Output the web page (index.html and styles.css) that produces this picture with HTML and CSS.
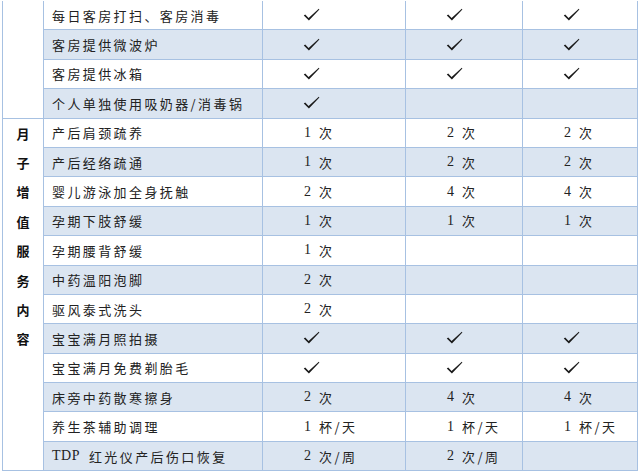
FILE: index.html
```html
<!DOCTYPE html>
<html lang="zh">
<head>
<meta charset="utf-8">
<link rel="stylesheet" href="styles.css">
</head>
<body>
<svg class="defs" width="0" height="0" aria-hidden="true">
  <defs>
    <symbol id="tick" viewBox="0 0 17 13">
      <path d="M0.8 7.4 L2.2 6.6 L5.6 10 L15.8 0.8 L16.4 1.4 L5.9 12.6 Z" fill="#1a1a1a"/>
    </symbol>
  </defs>
</svg>
<div class="table">
  <div class="side side-top"></div>
  <div class="side side-main">
    <div>月</div><div>子</div><div>增</div><div>值</div><div>服</div><div>务</div><div>内</div><div>容</div>
  </div>

  <div class="c name">每日客房打扫、客房消毒</div><div class="c v"><svg class="ck"><use href="#tick"/></svg></div><div class="c v"><svg class="ck"><use href="#tick"/></svg></div><div class="c v"><svg class="ck"><use href="#tick"/></svg></div>
  <div class="c name alt">客房提供微波炉</div><div class="c v alt"><svg class="ck"><use href="#tick"/></svg></div><div class="c v alt"><svg class="ck"><use href="#tick"/></svg></div><div class="c v alt"><svg class="ck"><use href="#tick"/></svg></div>
  <div class="c name">客房提供冰箱</div><div class="c v"><svg class="ck"><use href="#tick"/></svg></div><div class="c v"><svg class="ck"><use href="#tick"/></svg></div><div class="c v"><svg class="ck"><use href="#tick"/></svg></div>
  <div class="c name alt">个人单独使用吸奶器/消毒锅</div><div class="c v alt"><svg class="ck"><use href="#tick"/></svg></div><div class="c v alt"></div><div class="c v alt"></div>

  <div class="c name">产后肩颈疏养</div><div class="c v"><span class="n">1</span>次</div><div class="c v"><span class="n">2</span>次</div><div class="c v"><span class="n">2</span>次</div>
  <div class="c name alt">产后经络疏通</div><div class="c v alt"><span class="n">1</span>次</div><div class="c v alt"><span class="n">2</span>次</div><div class="c v alt"><span class="n">2</span>次</div>
  <div class="c name">婴儿游泳加全身抚触</div><div class="c v"><span class="n">2</span>次</div><div class="c v"><span class="n">4</span>次</div><div class="c v"><span class="n">4</span>次</div>
  <div class="c name alt">孕期下肢舒缓</div><div class="c v alt"><span class="n">1</span>次</div><div class="c v alt"><span class="n">1</span>次</div><div class="c v alt"><span class="n">1</span>次</div>
  <div class="c name">孕期腰背舒缓</div><div class="c v"><span class="n">1</span>次</div><div class="c v"></div><div class="c v"></div>
  <div class="c name alt">中药温阳泡脚</div><div class="c v alt"><span class="n">2</span>次</div><div class="c v alt"></div><div class="c v alt"></div>
  <div class="c name">驱风泰式洗头</div><div class="c v"><span class="n">2</span>次</div><div class="c v"></div><div class="c v"></div>
  <div class="c name alt">宝宝满月照拍摄</div><div class="c v alt"><svg class="ck"><use href="#tick"/></svg></div><div class="c v alt"><svg class="ck"><use href="#tick"/></svg></div><div class="c v alt"><svg class="ck"><use href="#tick"/></svg></div>
  <div class="c name">宝宝满月免费剃胎毛</div><div class="c v"><svg class="ck"><use href="#tick"/></svg></div><div class="c v"><svg class="ck"><use href="#tick"/></svg></div><div class="c v"><svg class="ck"><use href="#tick"/></svg></div>
  <div class="c name alt">床旁中药散寒擦身</div><div class="c v alt"><span class="n">2</span>次</div><div class="c v alt"><span class="n">4</span>次</div><div class="c v alt"><span class="n">4</span>次</div>
  <div class="c name">养生茶辅助调理</div><div class="c v"><span class="n">1</span>杯/天</div><div class="c v"><span class="n">1</span>杯/天</div><div class="c v"><span class="n">1</span>杯/天</div>
  <div class="c name alt"><span class="lat">TDP</span>红光仪产后伤口恢复</div><div class="c v alt"><span class="n">2</span>次/周</div><div class="c v alt"><span class="n">2</span>次/周</div><div class="c v alt"></div>
</div>
</body>
</html>
```
FILE: styles.css
```css
html, body {
  margin: 0;
  padding: 0;
  background: #ffffff;
}

.defs {
  position: absolute;
  width: 0;
  height: 0;
  overflow: hidden;
}

.table {
  display: grid;
  grid-template-columns: 40px 218px 142px 116px 114px;
  grid-auto-rows: 28.4px;
  gap: 1px;
  width: 636px;
  box-sizing: border-box;
  margin-left: 2px;
  padding: 0 1px 1px;
  border-top: 1px solid #ffffff;
  background: #a7c1e2;
  font-family: "Noto Sans CJK SC", "Liberation Serif", sans-serif;
  font-size: 13px;
  color: #222222;
  letter-spacing: 2.4px;
}

.side {
  background: #ffffff;
  grid-column: 1;
}

.side-top {
  grid-row: 1 / span 4;
}

.side-main {
  grid-row: 5 / span 12;
  display: flex;
  flex-direction: column;
  align-items: center;
  font-weight: bold;
  letter-spacing: 0;
  color: #111111;
}

.side-main div {
  height: 29.4px;
  line-height: 29.4px;
}

.c {
  background: #ffffff;
  display: flex;
  align-items: center;
  white-space: nowrap;
}

.c.alt {
  background: #dbe5f1;
}

.name {
  padding-left: 8px;
}

.v {
  padding-left: 41px;
}

.n {
  font-family: "Liberation Serif", serif;
  font-size: 14px;
  letter-spacing: 0;
  margin-right: 8px;
}

.lat {
  font-family: "Liberation Serif", serif;
  font-size: 14px;
  letter-spacing: 0.5px;
  margin-right: 9px;
}

.ck {
  width: 17px;
  height: 13px;
  margin-left: -1px;
  margin-top: -1px;
}
```
